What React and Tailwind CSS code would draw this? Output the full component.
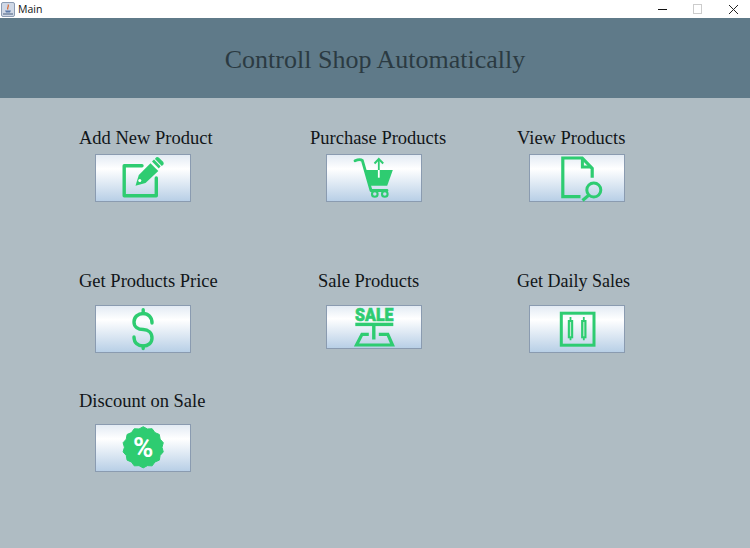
import React from "react";

const green = "#2ecc71";

function EditIcon() {
  return (
    <svg width="48" height="48" viewBox="0 0 48 48" fill="none" className="overflow-visible">
      <path d="M23 11.7H5.2V41.8H37.3V24" stroke={green} strokeWidth="3.4" strokeLinecap="round" strokeLinejoin="round" />
      <path d="M16.5 31.7 19.8 21 31.5 9.2 39.3 17 26.5 29Z" fill={green} />
      <circle cx="20.8" cy="26.4" r="1.5" fill="#fff" />
      <path d="M33 7.6 35 5.6 41.6 12.2 39.8 14.4Z" fill={green} />
      <path d="M36.4 4.2C37.4 2.8 38.8 2.8 40 3.8L43.8 7.4C45 8.6 45 10 44 11L42.8 12 36 5Z" fill={green} />
    </svg>
  );
}

function CartIcon() {
  return (
    <svg width="48" height="48" viewBox="0 0 48 48" fill="none" className="overflow-visible">
      <path d="M5 6.7C8 5.4 11 5.2 12.4 6.6L21 36.5H37" stroke={green} strokeWidth="2.8" strokeLinecap="round" strokeLinejoin="round" />
      <path d="M15.5 16H42.8L37.2 31.7H19.8Z" fill={green} />
      <circle cx="24.8" cy="40" r="2.8" stroke={green} strokeWidth="2.1" />
      <circle cx="34.8" cy="40" r="2.8" stroke={green} strokeWidth="2.1" />
      <path d="M28.8 6V16" stroke={green} strokeWidth="1.8" />
      <path d="M28.8 16V23.7" stroke="#fff" strokeWidth="1.8" />
      <path d="M24.5 9.5 28.8 5 33.2 9.5" stroke={green} strokeWidth="2" />
    </svg>
  );
}

function DocSearchIcon() {
  return (
    <svg width="48" height="48" viewBox="0 0 48 48" fill="none" className="overflow-visible">
      <path d="M27.5 42.7H9.8V4H29.2L39.2 14.3V23.7" stroke={green} strokeWidth="3.2" />
      <path d="M29.4 5V13H38" stroke={green} strokeWidth="3" />
      <circle cx="40.8" cy="36" r="7" stroke={green} strokeWidth="3" />
      <path d="M36 41 29.5 46.5" stroke={green} strokeWidth="3.2" />
    </svg>
  );
}

function DollarIcon() {
  return (
    <svg width="48" height="48" viewBox="0 0 48 48" fill="none" className="overflow-visible">
      <path d="M33 18C33 12 29 8.5 24.2 8.5 19 8.5 15 12 15 17 15 22 19 24.5 24.2 24.5 29 24.5 33 27.5 33 33 33 38 29 41 24.2 41 19 41 15 38 15 32" stroke={green} strokeWidth="3.4" strokeLinecap="round" />
      <path d="M24.2 4.8V8.5M24.2 41V43.6" stroke={green} strokeWidth="3.4" strokeLinecap="round" />
    </svg>
  );
}

function SaleIcon() {
  return (
    <svg width="48" height="43" viewBox="0 0 48 43" fill="none" className="overflow-visible">
      <text x="5" y="14.6" textLength="38.5" lengthAdjust="spacingAndGlyphs" fontFamily="Roboto, sans-serif" fontWeight="900" fontSize="18" fill={green} stroke={green} strokeWidth="0.6">SALE</text>
      <rect x="5.3" y="16.7" width="38" height="3.4" fill={green} />
      <rect x="22.1" y="19" width="3.4" height="14.5" fill={green} />
      <path d="M18.8 28.3H12L6.5 39H42.5L37.8 28.3H28.8" stroke={green} strokeWidth="3.2" />
    </svg>
  );
}

function ChartIcon() {
  return (
    <svg width="48" height="48" viewBox="0 0 48 48" fill="none" className="overflow-visible">
      <rect x="8.3" y="8.2" width="32.7" height="32" stroke={green} strokeWidth="3" />
      <path d="M17.5 12V35.2M30.8 12V35.2" stroke={green} strokeWidth="1.8" />
      <rect x="14.8" y="15" width="5.4" height="18.3" fill={green} />
      <rect x="28.1" y="15" width="5.4" height="18.3" fill={green} />
      <rect x="16.9" y="17" width="1.2" height="14.3" fill="#bdeccf" />
      <rect x="30.2" y="17" width="1.2" height="14.3" fill="#bdeccf" />
    </svg>
  );
}

// scalloped badge outline
const badgePoints = Array.from({ length: 28 }, (_, i) => {
  const a = (i / 28) * Math.PI * 2 - Math.PI / 2;
  const r = i % 2 === 0 ? 20.6 : 18.8;
  return `${(24.2 + Math.cos(a) * r).toFixed(2)},${(23.3 + Math.sin(a) * r).toFixed(2)}`;
}).join(" ");

function DiscountIcon() {
  return (
    <svg width="48" height="48" viewBox="0 0 48 48" className="overflow-visible">
      <polygon points={badgePoints} fill={green} stroke={green} strokeLinejoin="round" />
      <text x="14" y="32.6" textLength="20.4" lengthAdjust="spacingAndGlyphs" fontFamily="Roboto, sans-serif" fontWeight="700" fontSize="27" fill="#fff">%</text>
    </svg>
  );
}

function JavaIcon() {
  return (
    <svg width="14" height="15" viewBox="0 0 14 15" fill="none">
      <rect x="0.5" y="0.5" width="13" height="14" rx="1.5" fill="#cfd8e6" stroke="#8b9bb2" />
      <rect x="2" y="11" width="10" height="2" fill="#8b9bb2" />
      <path d="M7 2.5C8.5 4.5 5.5 5.5 7 7.5" stroke="#d9632a" strokeWidth="1.2" />
      <path d="M4 8.5H10L9 10.5H5Z" fill="#5a78a8" />
    </svg>
  );
}

function ActionCell({ label, labelClass = "text-[18.5px]", buttonClass, children }) {
  return (
    <div className="flex flex-col items-start">
      <span className={`leading-[21px] text-[#111518] whitespace-nowrap ${labelClass}`}>{label}</span>
      <button className={`flex w-[96px] items-center justify-center border border-[#8a9bb0] bg-gradient-to-b from-[#e3ebf4] via-[#ffffff] via-30% to-[#b8cfe6] ${buttonClass}`}>
        {children}
      </button>
    </div>
  );
}

export default function App() {
  return (
    <div className="flex h-[548px] w-[750px] flex-col overflow-hidden bg-[#afbcc3] font-['Liberation_Serif',serif]">
      {/* Title bar */}
      <div className="flex h-[18px] items-center justify-between bg-white">
        <div className="flex items-center gap-[3px] pl-[1px]">
          <JavaIcon />
          <span className="font-['Open_Sans',sans-serif] text-[10.5px] leading-none text-[#111]">Main</span>
        </div>
        <div className="flex items-center gap-[26px] pr-[11px]">
          <span className="h-[1px] w-[9px] bg-[#111]" />
          <span className="h-[10px] w-[9px] border border-[#ccc]" />
          <svg width="11" height="11" viewBox="0 0 11 11" fill="none">
            <path d="M1 1 10 10M10 1 1 10" stroke="#222" strokeWidth="1" />
          </svg>
        </div>
      </div>

      {/* Header */}
      <div className="flex h-[80px] items-center justify-center bg-[#5f7a89] pt-[2px] text-[26px] text-[#2b3a42]">
        Controll Shop Automatically
      </div>

      {/* Actions */}
      <div className="grid grid-cols-[231px_207px_auto] grid-rows-[143px_120px_auto] pl-[79px] pt-[30px]">
        <ActionCell label="Add New Product" buttonClass="ml-[16px] mt-[5px] h-[48px]"><EditIcon /></ActionCell>
        <ActionCell label="Purchase Products" buttonClass="ml-[16px] mt-[5px] h-[48px]"><CartIcon /></ActionCell>
        <ActionCell label="View Products" buttonClass="ml-[12px] mt-[5px] h-[48px]"><DocSearchIcon /></ActionCell>

        <ActionCell label="Get Products Price" buttonClass="ml-[16px] mt-[13px] h-[48px]"><DollarIcon /></ActionCell>
        <ActionCell label="Sale Products" labelClass="ml-[8px] text-[18.5px]" buttonClass="ml-[16px] mt-[13px] h-[44px]"><SaleIcon /></ActionCell>
        <ActionCell label="Get Daily Sales" labelClass="text-[18px]" buttonClass="ml-[12px] mt-[13px] h-[48px]"><ChartIcon /></ActionCell>

        <ActionCell label="Discount on Sale" buttonClass="ml-[16px] mt-[12px] h-[48px]"><DiscountIcon /></ActionCell>
      </div>
    </div>
  );
}
